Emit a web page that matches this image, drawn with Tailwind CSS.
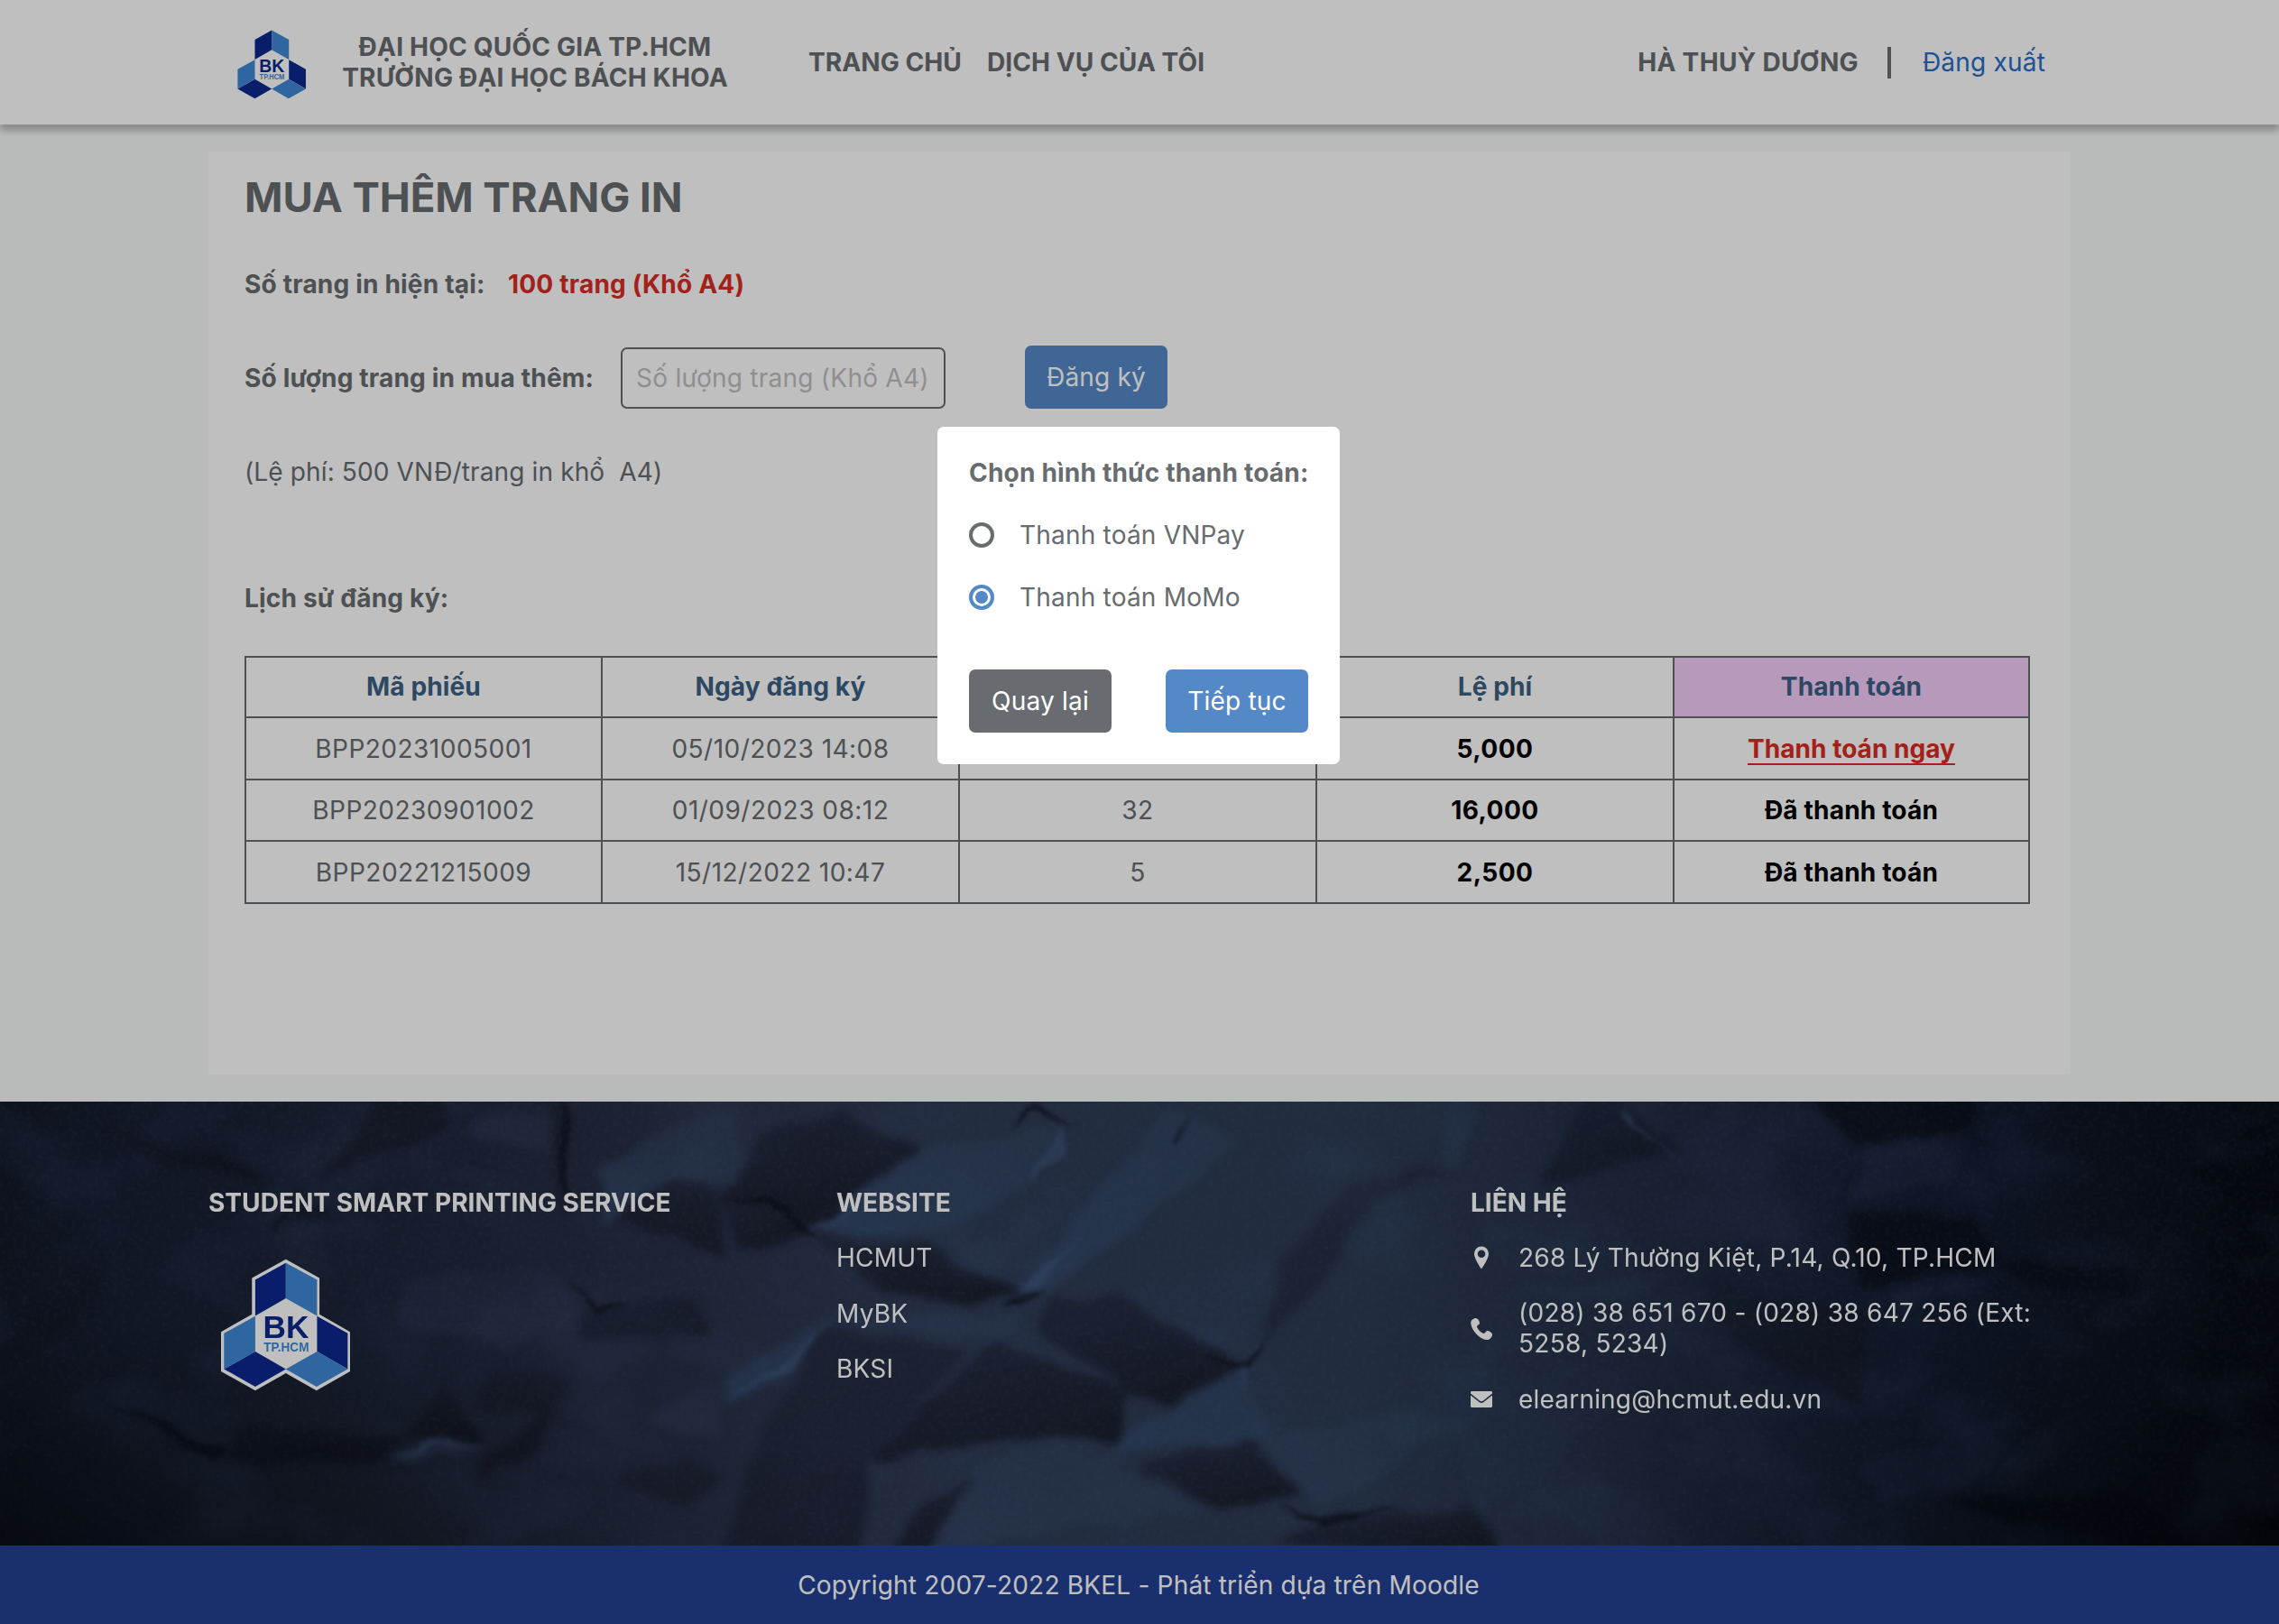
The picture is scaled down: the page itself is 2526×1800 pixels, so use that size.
<!DOCTYPE html>
<html lang="vi">
<head>
<meta charset="utf-8">
<title>Student Smart Printing Service</title>
<script src="https://cdn.jsdelivr.net/npm/@tailwindcss/browser@4"></script>
</head>
<body class="h-[1800px] w-[2526px] overflow-hidden bg-[#f7faf9] font-[Inter,sans-serif] text-[28.07px] leading-[34px] tracking-[0.17px] text-[#686c70]">
<svg width="0" height="0" class="absolute">
  <symbol id="logo" viewBox="74 76 434 442">
    <path fill="#fff" d="M292 78 404 141V262L506 320V452L394 516 292 458 190 516 76 452V320L179 262V141Z"/>
    <path fill="#0c298f" d="M292 90V208L190 267V147ZM190 386 292 444 190 503 86 444ZM396 268 498 325V444L396 386Z"/>
    <path fill="#3f88d6" d="M292 90 396 147V267L292 208ZM190 268V386L86 444V325ZM396 386 498 444 394 503 292 444Z"/>
    <text x="216" y="341" letter-spacing="0" font-family="Liberation Sans, sans-serif" font-weight="700" font-size="108" textLength="153" lengthAdjust="spacingAndGlyphs" fill="#0c298f">BK</text>
    <text x="218" y="386" letter-spacing="0" font-family="Liberation Sans, sans-serif" font-weight="700" font-size="46" textLength="151" lengthAdjust="spacingAndGlyphs" fill="#3f88d6">TP.HCM</text>
  </symbol>
</svg>

<header class="relative flex h-[138px] items-center bg-white pl-[261px] font-bold shadow-[0_7px_7px_rgba(0,0,0,0.25)]">
  <svg class="mt-1 h-[81px] w-20"><use href="#logo"/></svg>
  <div class="ml-[38px] w-[428px] text-center whitespace-nowrap">ĐẠI HỌC QUỐC GIA TP.HCM<br>TRƯỜNG ĐẠI HỌC BÁCH KHOA</div>
  <nav class="ml-[89px] flex tracking-[0.05px] whitespace-nowrap">
    <a class="w-[198px]">TRANG CHỦ</a>
    <a>DỊCH VỤ CỦA TÔI</a>
  </nav>
  <div class="mr-[259px] ml-auto flex items-center whitespace-nowrap">
    <span class="tracking-[0.28px]">HÀ THUỲ DƯƠNG</span>
    <span class="mr-[35px] ml-8 h-[35px] w-1 bg-[#686c70]"></span>
    <a class="font-normal text-[#296dc7]">Đăng xuất</a>
  </div>
</header>

<main class="ml-[231px] mt-[30px] h-[1023px] w-[2063px] bg-white px-10 pt-6">
  <h1 class="text-[45.6px] leading-[54px] font-bold tracking-[-0.1px]">MUA THÊM TRANG IN</h1>
  <div class="mt-[52px] flex font-bold">
    <span class="w-[292px]">Số trang in hiện tại:</span>
    <span class="text-[#d92d25]">100 trang (Khổ A4)</span>
  </div>
  <div class="mt-[51px] flex items-end">
    <span class="mb-[17px] w-[417px] font-bold">Số lượng trang in mua thêm:</span>
    <div class="flex h-[68px] w-[360px] items-center rounded-[7px] border-2 border-[#686c70] pl-[15px] tracking-[0.22px] whitespace-nowrap text-[#bfbfbf]">Số lượng trang (Khổ A4)</div>
    <button class="ml-[88px] h-[70px] w-[158px] rounded-[7px] bg-[#5488c7] text-white">Đăng ký</button>
  </div>
  <p class="mt-[53px] tracking-[0.1px] whitespace-pre">(Lệ phí: 500 VNĐ/trang in khổ  A4)</p>
  <h2 class="mt-[106px] font-bold">Lịch sử đăng ký:</h2>
  <table class="mt-[47px] w-[1979px] table-fixed border-collapse text-center tracking-[0.45px] [&_td]:border-2 [&_td]:border-[#686c70] [&_th]:border-2 [&_th]:border-[#686c70]">
    <colgroup><col class="w-[395px]"><col class="w-[396px]"><col class="w-[396px]"><col class="w-[396px]"><col></colgroup>
    <tr class="h-[67px] tracking-[0.1px] text-[#3c6184] [&_th]:pb-0.5 [&_th]:font-bold"><th>Mã phiếu</th><th>Ngày đăng ký</th><th>Số trang</th><th>Lệ phí</th><th class="bg-[#f5cdfb]">Thanh toán</th></tr>
    <tr class="h-[69px]"><td>BPP20231005001</td><td>05/10/2023 14:08</td><td>10</td><td class="font-bold text-black">5,000</td><td class="font-bold tracking-normal text-[#d92d25]"><a class="underline decoration-2 underline-offset-[6px] [text-decoration-skip-ink:none]">Thanh toán ngay</a></td></tr>
    <tr class="h-[68px]"><td>BPP20230901002</td><td>01/09/2023 08:12</td><td>32</td><td class="font-bold text-black">16,000</td><td class="font-bold tracking-[0.15px] text-black">Đã thanh toán</td></tr>
    <tr class="h-[69px]"><td>BPP20221215009</td><td>15/12/2022 10:47</td><td>5</td><td class="font-bold text-black">2,500</td><td class="font-bold tracking-[0.15px] text-black">Đã thanh toán</td></tr>
  </table>
</main>

<footer class="relative mt-[30px] h-[492px] overflow-hidden bg-[#1c2334] text-white">
  <!-- crumpled navy paper -->
  <svg class="absolute inset-0" width="2526" height="492" viewBox="0 0 2526 492" preserveAspectRatio="none">
    <defs>
      <linearGradient id="base"><stop offset="0" stop-color="#121927"/><stop offset=".05" stop-color="#161e2f"/><stop offset=".15" stop-color="#1c2436"/><stop offset=".28" stop-color="#272f44"/><stop offset=".42" stop-color="#2f3c56"/><stop offset=".6" stop-color="#2d3b54"/><stop offset=".72" stop-color="#212d42"/><stop offset=".86" stop-color="#121b2d"/><stop offset="1" stop-color="#080b13"/></linearGradient>
      <linearGradient id="down" x2="0" y2="1"><stop offset=".5" stop-color="#fff" stop-opacity="0"/><stop offset="1" stop-color="#fff"/></linearGradient>
      <linearGradient id="edges"><stop offset="0" stop-color="#000"/><stop offset=".35" stop-color="#000" stop-opacity="0"/><stop offset=".7" stop-color="#000" stop-opacity="0"/><stop offset="1" stop-color="#000"/></linearGradient>
      <linearGradient id="dark" x1=".2" y1="0" x2=".8" y2="1"><stop offset="0" stop-color="#181a26" stop-opacity=".55"/><stop offset="1" stop-color="#12141f"/></linearGradient>
      <linearGradient id="light" x1="1" y1="0" x2="0" y2="1"><stop offset="0" stop-color="#3a5074" stop-opacity=".35"/><stop offset="1" stop-color="#384e72"/></linearGradient>
      <mask id="low"><rect width="2526" height="492" fill="url(#down)"/></mask>
      <filter id="soft" x="-5%" y="-5%" width="110%" height="110%" color-interpolation-filters="sRGB"><feTurbulence type="fractalNoise" baseFrequency=".018" numOctaves="3" seed="4"/><feDisplacementMap in="SourceGraphic" scale="22" xChannelSelector="R" yChannelSelector="G"/><feGaussianBlur stdDeviation="5"/></filter>
      <filter id="crease" x="-5%" y="-5%" width="110%" height="110%" color-interpolation-filters="sRGB"><feTurbulence type="fractalNoise" baseFrequency=".018" numOctaves="3" seed="4"/><feDisplacementMap in="SourceGraphic" scale="22" xChannelSelector="R" yChannelSelector="G"/><feGaussianBlur stdDeviation="2.5"/></filter>
      <filter id="mottle" x="0" y="0" width="100%" height="100%" color-interpolation-filters="sRGB"><feTurbulence type="fractalNoise" baseFrequency=".007 .01" numOctaves="5" seed="12"/><feColorMatrix values="0 0 0 0 .25  0 0 0 0 .34  0 0 0 0 .5  2.4 0 0 0 -1.1"/></filter>
      <filter id="grain" x="0" y="0" width="100%" height="100%" color-interpolation-filters="sRGB"><feTurbulence type="fractalNoise" baseFrequency=".2" numOctaves="3" seed="3"/><feColorMatrix values="0 0 0 0 .4  0 0 0 0 .5  0 0 0 0 .68  1.2 0 0 0 -.5"/></filter>
    </defs>
    <rect width="2526" height="492" fill="url(#base)"/>
    <rect width="2526" height="492" filter="url(#mottle)" opacity=".22"/>
    <g filter="url(#soft)">
      <g fill="url(#dark)" opacity=".75">
        <path d="M844 42 932 14 1030 54 965 93 899 141 855 117 800 105Z"/>
        <path d="M800 105 866 117 899 145 816 168Z"/>
        <path d="M899 149 1030 157 1129 216 1058 224 981 212Z"/>
        <path d="M1162 216 1239 216 1381 291 1294 338 1255 323 1151 259Z"/>
        <path d="M1107 267 1255 323 1239 378 1129 370 981 398 965 394 1063 299Z"/>
        <path d="M1261 402 1381 374 1442 437 1348 453Z"/>
        <path d="M1409 492 1464 465 1628 453 1660 500Z"/>
        <path d="M910 251 1074 275 965 394 953 500H800L822 420Z" opacity=".7"/>
        <path d="M989 500 1019 449 1085 413 1019 500Z"/>
        <path d="M1502 85 1623 70 1524 109 1458 212 1403 267 1420 180Z" opacity=".55"/>
        <path d="M316 101 500 30 490 -5H430L306 137 388 129Z"/>
        <path d="M102 22 245 62 300 95 153 60Z"/>
        <path d="M112 330 250 394 281 358 449 370 423 402 255 402Z"/>
        <path d="M449 370 490 315 540 374Z"/>
        <path d="M536 394 622 335 592 386 530 421Z"/>
        <path d="M678 133 734 85 800 93V170Z" opacity=".8"/>
        <path d="M632 196 658 228 765 216 800 259H637Z" opacity=".6"/>
        <path d="M546 295 612 295 637 315 600 350 520 340Z" opacity=".6"/>
        <path d="M680 420 760 390 800 420 760 450Z" opacity=".6"/>
        <path d="M0 270 90 190 140 140 110 210 40 290Z" opacity=".6"/>
        <path d="M1712 81 1759 -5H1795L1854 54 1777 77 1706 101Z" opacity=".8"/>
        <path d="M1877 196 2072 236 2060 338 1930 275Z" opacity=".7"/>
        <path d="M600 0H632L627 137 617 74Z" opacity=".7"/>
      </g>
      <g fill="#070a13" opacity=".6">
        <path d="M2002 -5H2190V34L2060 50Z"/>
        <path d="M2043 125 2190 129 2220 180 2060 204Z"/>
        <path d="M2226 172 2362 184V220L2226 192Z"/>
        <path d="M2155 441 2368 437 2450 500 2202 461Z"/>
        <path d="M2415 78 2530 50V130L2430 90Z"/>
      </g>
      <g fill="url(#light)" opacity=".7">
        <path d="M910 141 965 89 1030 50 1178 26 1140 89 1047 145Z"/>
        <path d="M1129 212 1195 125 1294 10 1376 38 1283 117 1157 216Z"/>
        <path d="M800 331V303L932 236 1140 236 1107 263 921 248 855 315Z"/>
        <path d="M1228 386 1376 295 1381 315 1409 374Z"/>
        <path d="M1392 374 1568 338 1623 358 1458 449Z" opacity=".6"/>
        <path d="M1151 370 1228 390 1338 453 1030 500 1085 406Z" opacity=".5"/>
        <path d="M520 38 535 18 602 2 612 58Z" opacity=".6"/>
        <path d="M663 77 765 14 820 18V89L734 81 673 137Z"/>
        <path d="M449 196 612 180 653 228 561 275 439 244Z" opacity=".4"/>
        <path d="M428 398 474 374 540 378 510 390Z"/>
        <path d="M740 340 800 307V370L715 360Z" opacity=".6"/>
        <path d="M1671 212 1877 188 1777 224Z" opacity=".5"/>
        <path d="M2072 54 2190 42 2155 89 2049 109Z" opacity=".35"/>
        <path d="M2084 212 2220 192 2190 208 2108 232Z" opacity=".4"/>
        <path d="M1600 300 1836 295 1748 374 1718 406 1635 461Z" opacity=".25"/>
        <path d="M1600 0H1640L1620 70 1600 70Z" opacity=".5"/>
        <path d="M2060 400 2260 340 2180 430 2080 440Z" opacity=".25"/>
      </g>
    </g>
    <g filter="url(#crease)">
      <path fill="#0c0f1a" opacity=".7" d="M800 102 870 114 912 160 864 122ZM1108 224 1162 210 1130 230ZM1335 280 1381 291 1412 256 1384 300ZM1418 446 1464 460 1560 452 1466 471ZM622 0H628L630 130 620 70ZM630 194 660 226 700 222 658 234ZM298 140 330 100 306 141ZM112 328 255 390 240 402ZM1116 30 1145 6 1197 24 1146 15ZM1298 54 1320 10 1306 50ZM2412 78 2358 215 2366 215 2420 80Z"/>
      <path fill="#4a6690" opacity=".4" d="M893 145 960 98 915 140ZM1127 214 1195 155 1150 210ZM1374 297 1380 295V330ZM428 400 480 374 545 378 482 382ZM1795 3 1867 78 1800 14ZM800 327 870 286 922 246 875 296ZM1178 24 1184 60 1140 89Z"/>
    </g>
    <rect width="2526" height="492" filter="url(#grain)" opacity=".15"/>
    <rect width="2526" height="492" fill="url(#edges)" opacity=".45" mask="url(#low)"/>
  </svg>
  <div class="relative flex pt-[95px] pl-[231px]">
    <section class="w-[696px]">
      <h3 class="font-bold tracking-normal">STUDENT SMART PRINTING SERVICE</h3>
      <svg class="mt-[45px] ml-[13px] h-[147px] w-[145px]"><use href="#logo"/></svg>
    </section>
    <section class="flex w-[703px] flex-col gap-[27.3px]">
      <h3 class="font-bold tracking-normal">WEBSITE</h3>
      <a>HCMUT</a><a>MyBK</a><a>BKSI</a>
    </section>
    <section class="flex w-[660px] flex-col gap-[27.4px]">
      <h3 class="font-bold tracking-normal">LIÊN HỆ</h3>
      <div class="flex items-center gap-[29px]">
        <svg class="w-6 shrink-0" height="26" viewBox="0 0 24 26" fill="#fff"><path fill-rule="evenodd" d="M12 .5A8 8 0 0 0 4 8.500C4 14.500 12 25.500 12 25.500S20 14.500 20 8.500A8 8 0 0 0 12 .5ZM12 4.500A4.300 4.300 0 1 1 12 13.100 4.300 4.300 0 0 1 12 4.500Z"/></svg>
        <span class="tracking-[0.2px]">268 Lý Thường Kiệt, P.14, Q.10, TP.HCM</span>
      </div>
      <div class="flex items-center gap-[29px]">
        <svg class="w-6 shrink-0" height="24" viewBox="0 0 24 24" fill="#fff"><path d="M1 2.500C3 .3 5.500-.6 7.200.6 9.200 2.200 10.400 4.700 9.800 6.300 9.400 7.500 7 8 7 9.300 7.200 11.800 12 16.600 14.500 17 16 17.200 16.500 14.500 18.200 14 20 13.600 22.500 15.200 23.700 17 24.700 18.800 23 22.200 20.500 23.400 17.500 24.800 12.500 23.500 7.800 19 2.500 14-1.500 6 1 2.500Z"/></svg>
        <span class="leading-[33.8px] tracking-[0.24px] whitespace-nowrap">(028) 38 651 670 - (028) 38 647 256 (Ext:<br>5258, 5234)</span>
      </div>
      <div class="flex items-center gap-[29px]">
        <svg class="w-6 shrink-0" height="18" viewBox="0 0 24 18" fill="#fff"><path d="M1 0H23L24 1V2.600L14 10.500Q12 12 10 10.500L0 2.600V1ZM0 4.500 9.500 12Q12 13.800 14.500 12L24 4.500V17L23 18H1L0 17Z"/></svg>
        <span>elearning@hcmut.edu.vn</span>
      </div>
    </section>
  </div>
</footer>
<div class="flex h-[87px] items-center justify-center bg-[#234193] pr-[2px] text-white">Copyright 2007-2022 BKEL - Phát triển dựa trên Moodle</div>

<div class="absolute inset-0 h-[1800px] w-[2526px] bg-black/25"></div>
<div class="absolute top-[473px] left-[1039px] h-[374px] w-[446px] rounded-[7px] bg-white px-[35px] pt-[34px]">
  <h2 class="font-bold whitespace-nowrap">Chọn hình thức thanh toán:</h2>
  <label class="mt-[35px] flex items-center gap-[28px]"><span class="size-7 rounded-full border-[4px] border-[#686c70]"></span>Thanh toán VNPay</label>
  <label class="mt-[34.5px] flex items-center gap-[28px]"><span class="flex size-7 items-center justify-center rounded-full border-[4px] border-[#5488c7]"><span class="size-[14px] rounded-full bg-[#5488c7]"></span></span>Thanh toán MoMo</label>
  <div class="mt-[63.5px] flex justify-between">
    <button class="h-[70px] w-[158px] rounded-[7px] bg-[#686c70] text-white">Quay lại</button>
    <button class="h-[70px] w-[158px] rounded-[7px] bg-[#5488c7] text-white">Tiếp tục</button>
  </div>
</div>
</body>
</html>
